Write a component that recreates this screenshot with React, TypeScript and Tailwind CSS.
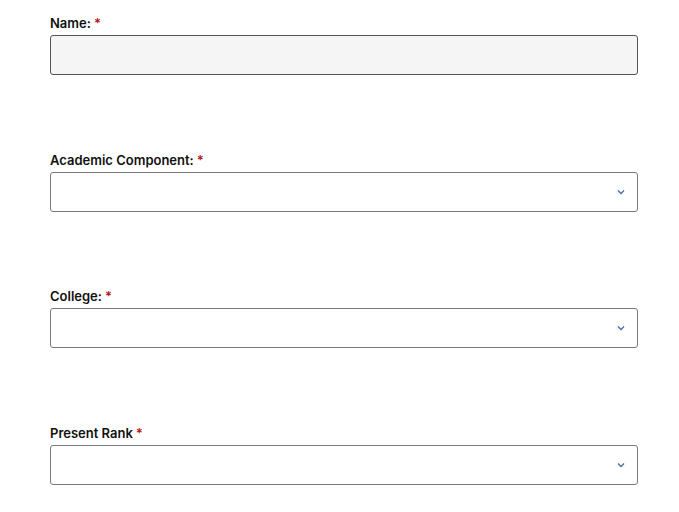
import React from "react";

const Chevron = () => (
  <svg
    width="8"
    height="6"
    viewBox="0 0 8 6"
    fill="none"
    className="absolute right-[12px] top-1/2 -translate-y-1/2"
  >
    <path d="M1 1.5L4 4.5L7 1.5" stroke="#4b6fa3" strokeWidth="1.4" />
  </svg>
);

const Label = ({ text }: { text: string }) => (
  <label className="block text-[13px] leading-5 font-semibold text-[#111] mb-0.5">
    {text}
    <span className="ml-[3px] text-[#b5121b]">*</span>
  </label>
);

const SelectField = ({ label }: { label: string }) => (
  <div>
    <Label text={label} />
    <div className="relative h-10 rounded-[3px] border border-[#7a7a7a] bg-white">
      <Chevron />
    </div>
  </div>
);

export default function App() {
  return (
    <div
      className="min-h-[512px] bg-white px-[50px] pt-[13px] w-[688px]"
      style={{ fontFamily: "Inter, 'Liberation Sans', sans-serif" }}
    >
      <div className="flex flex-col gap-[74.5px]">
        <div>
          <Label text="Name:" />
          <div className="h-10 rounded-[3px] border border-[#555] bg-[#f5f5f5]" />
        </div>
        <SelectField label="Academic Component:" />
        <SelectField label="College:" />
        <SelectField label="Present Rank" />
      </div>
    </div>
  );
}
